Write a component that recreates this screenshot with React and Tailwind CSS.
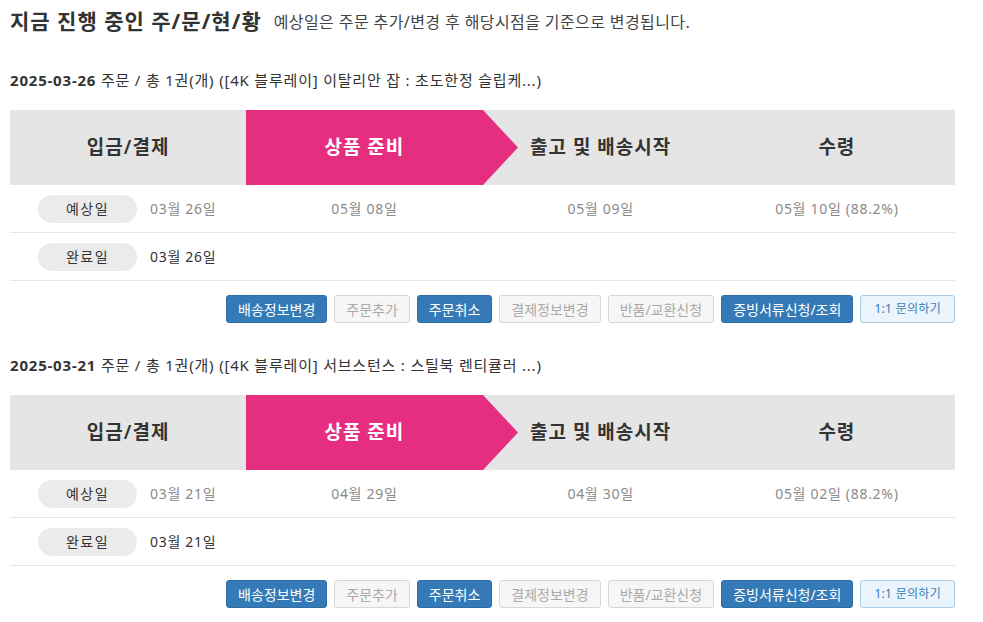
import React from 'react';

const orders = [
  {
    date: '2025-03-26',
    title: '([4K 블루레이] 이탈리안 잡 : 초도한정 슬립케...)',
    paid: '03월 26일',
    ready: '05월 08일',
    ship: '05월 09일',
    receive: '05월 10일 (88.2%)',
    done: '03월 26일',
  },
  {
    date: '2025-03-21',
    title: '([4K 블루레이] 서브스턴스 : 스틸북 렌티큘러 ...)',
    paid: '03월 21일',
    ready: '04월 29일',
    ship: '04월 30일',
    receive: '05월 02일 (88.2%)',
    done: '03월 21일',
  },
];

const buttons = [
  { label: '배송정보변경', kind: 'blue' },
  { label: '주문추가', kind: 'off' },
  { label: '주문취소', kind: 'blue' },
  { label: '결제정보변경', kind: 'off' },
  { label: '반품/교환신청', kind: 'off' },
  { label: '증빙서류신청/조회', kind: 'blue' },
  { label: '1:1 문의하기', kind: 'ask' },
];

const btnClass = {
  blue: 'bg-[#337ab7] border-[#2e6da4] text-white text-[14px] px-[11px]',
  off: 'bg-[#f6f6f6] border-[#d6d6d6] text-[#a9a9a9] text-[14px] px-[11px]',
  ask: 'bg-[#eaf4fc] border-[#a9cbe6] text-[#3a7cb5] text-[12px] px-[13px] tracking-[0.3px]',
};

const Pill = ({ children }) => (
  <span className="w-[99px] h-[28px] rounded-full bg-[#ebebeb] flex items-center justify-center text-[14px] text-[#333] tracking-[1.5px]">
    {children}
  </span>
);

const OrderBlock = ({ order }) => (
  <div>
    <div className="h-[20px] leading-[20px] text-[15px] text-[#333] tracking-[0.8px]">
      <span className="font-bold">{order.date}</span> 주문 / 총 1권(개) {order.title}
    </div>

    <div className="mt-[20px] flex h-[75px] bg-[#e5e5e5] text-[19px] font-semibold text-[#333] tracking-[1px]">
      <div className="w-1/4 flex items-center justify-center">입금/결제</div>
      <div className="w-1/4 relative bg-[#e62e80] text-white flex items-center justify-center">
        상품 준비
        <svg className="absolute left-full top-0" width="36" height="75" viewBox="0 0 36 75">
          <polygon points="0,0 35,37.5 0,75" fill="#e62e80" />
        </svg>
      </div>
      <div className="w-1/4 flex items-center justify-center">출고 및 배송시작</div>
      <div className="w-1/4 flex items-center justify-center">수령</div>
    </div>

    <div className="flex h-[48px] items-center border-b border-[#e5e5e5] text-[14px] text-[#8a8a8a] tracking-[0.7px]">
      <div className="w-1/4 flex items-center pl-[28px] gap-[13px]">
        <Pill>예상일</Pill>
        <span>{order.paid}</span>
      </div>
      <div className="w-1/4 text-center">{order.ready}</div>
      <div className="w-1/4 text-center">{order.ship}</div>
      <div className="w-1/4 text-center">{order.receive}</div>
    </div>

    <div className="flex h-[48px] items-center border-b border-[#e5e5e5] text-[14px] text-[#333] tracking-[0.7px]">
      <div className="w-1/4 flex items-center pl-[28px] gap-[13px]">
        <Pill>완료일</Pill>
        <span>{order.done}</span>
      </div>
    </div>

    <div className="mt-[14px] flex justify-end gap-[7px]">
      {buttons.map((b) => (
        <span
          key={b.label}
          className={`h-[28px] flex items-center border rounded-[3px] ${btnClass[b.kind]}`}
        >
          {b.label}
        </span>
      ))}
    </div>
  </div>
);

export default function App() {
  return (
    <div className="bg-white w-[983px] h-[622px] overflow-hidden font-['Noto_Sans','Noto_Sans_CJK_KR',sans-serif]">
      <div className="ml-[10px] w-[945px] pt-[8px]">
        <div className="h-[28px] flex items-center gap-[12px]">
          <h1 className="text-[21px] font-bold text-[#333] tracking-[1px]">지금 진행 중인 주/문/현/황</h1>
          <span className="text-[16px] text-[#444] tracking-[0.4px]">예상일은 주문 추가/변경 후 해당시점을 기준으로 변경됩니다.</span>
        </div>
        <div className="mt-[34px] flex flex-col gap-[32px]">
          {orders.map((o) => (
            <OrderBlock key={o.date} order={o} />
          ))}
        </div>
      </div>
    </div>
  );
}
